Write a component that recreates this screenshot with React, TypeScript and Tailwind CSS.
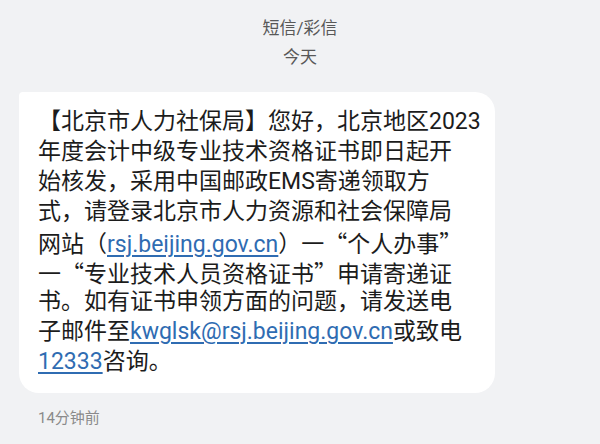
import React from 'react';

const link = 'text-[#2f6cb2] underline decoration-[1.5px] underline-offset-[3px]';
const cjk = "font-['Noto_Sans_CJK_SC']";

const lines: React.ReactNode[] = [
  '【北京市人力社保局】您好，北京地区2023',
  '年度会计中级专业技术资格证书即日起开',
  '始核发，采用中国邮政EMS寄递领取方',
  '式，请登录北京市人力资源和社会保障局',
  <>
    网站（<span className={link}>rsj.beijing.gov.cn</span>）一<span className={cjk}>“</span>个人办事<span className={cjk}>”</span>
  </>,
  <>
    一<span className={cjk}>“</span>专业技术人员资格证书<span className={cjk}>”</span>申请寄递证
  </>,
  '书。如有证书申领方面的问题，请发送电',
  <>
    子邮件至<span className={link}>kwglsk@rsj.beijing.gov.cn</span>或致电
  </>,
  <>
    <span className={link}>12333</span>咨询。
  </>,
];

export default function App() {
  return (
    <div
      className="w-[600px] h-[444px] bg-[#f1f2f4] overflow-hidden flex flex-col"
      style={{ fontFamily: 'Roboto, "Noto Sans CJK SC", sans-serif' }}
    >
      <div className="pt-[16px] flex flex-col items-center gap-[5px] text-[17px] leading-[24px] text-[#585858]">
        <div>短信/彩信</div>
        <div>今天</div>
      </div>

      <div className="ml-[19px] mt-[23px] w-[476px] bg-white rounded-[20px] rounded-tl-[4px] pl-[19px] pr-[10px] pt-[15px] pb-[16px]">
        <div className="text-[23px] leading-[30px] text-[#1c1c1c]">
          {lines.map((l, i) => (
            <div key={i} className="h-[30px] whitespace-nowrap">
              {l}
            </div>
          ))}
        </div>
      </div>

      <div className="ml-[38px] mt-[15px] text-[15px] leading-[20px] text-[#8a8a8a]">14分钟前</div>
    </div>
  );
}
